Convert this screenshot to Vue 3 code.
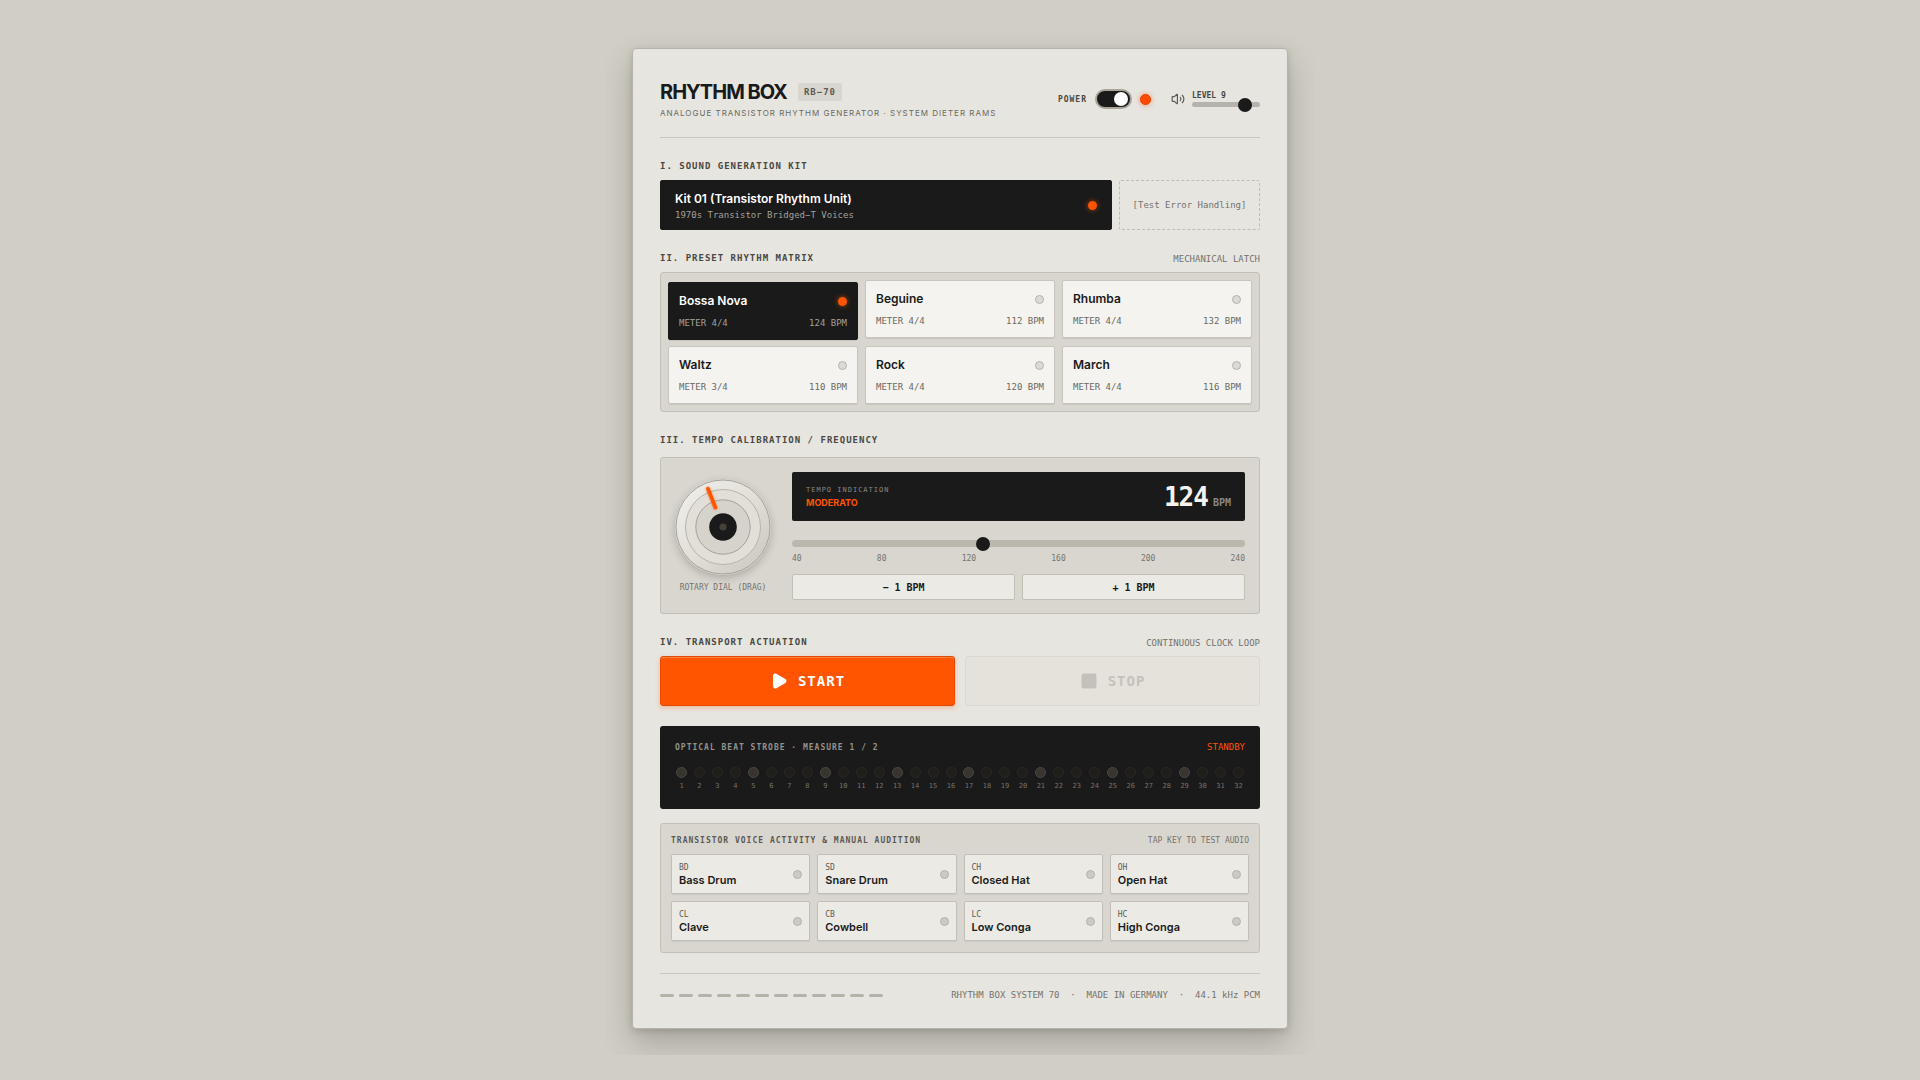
<template>
  <div class="page">
    <div class="stage">
      <main class="unit">
        <!-- header -->
        <header class="unit-header">
          <div class="brand">
            <div class="brand-row">
              <h1 class="brand-name">RHYTHM BOX</h1>
              <span class="brand-badge">RB−70</span>
            </div>
            <p class="brand-sub">ANALOGUE TRANSISTOR RHYTHM GENERATOR · SYSTEM DIETER RAMS</p>
          </div>
          <div class="master">
            <div class="power">
              <label class="power-label" for="power">POWER</label>
              <input id="power" v-model="power" class="power-switch" type="checkbox" role="switch" />
              <span class="led led-power" :class="{ off: !power }"></span>
            </div>
            <div class="volume">
              <svg class="volume-icon" viewBox="0 0 24 24" fill="none" stroke="currentColor" stroke-width="2" stroke-linecap="round" stroke-linejoin="round">
                <path d="M11 4.7a.7.7 0 0 0-1.2-.5L6.4 7.6a1.4 1.4 0 0 1-1 .4H3a1 1 0 0 0-1 1v6a1 1 0 0 0 1 1h2.4a1.4 1.4 0 0 1 1 .4l3.4 3.4a.7.7 0 0 0 1.2-.5z" />
                <path d="M16 9a5 5 0 0 1 0 6" />
                <path d="M19.4 18.4a9 9 0 0 0 0-12.8" />
              </svg>
              <div class="volume-body">
                <label class="volume-label" for="level">LEVEL {{ Math.round(level / 10) }}</label>
                <input id="level" v-model.number="level" class="slider slider-level" type="range" min="0" max="100" />
              </div>
            </div>
          </div>
        </header>

        <!-- kit -->
        <section class="section">
          <div class="section-head">
            <h2>I. SOUND GENERATION KIT</h2>
          </div>
          <div class="kit-row">
            <button class="kit" type="button">
              <span class="kit-text">
                <span class="kit-name">Kit 01 (Transistor Rhythm Unit)</span>
                <span class="kit-desc">1970s Transistor Bridged−T Voices</span>
              </span>
              <span class="led led-on"></span>
            </button>
            <button class="kit-error" type="button">[Test Error Handling]</button>
          </div>
        </section>

        <!-- presets -->
        <section class="section">
          <div class="section-head">
            <h2>II. PRESET RHYTHM MATRIX</h2>
            <span class="note">MECHANICAL LATCH</span>
          </div>
          <div class="tray presets">
            <button
              v-for="preset in presets"
              :key="preset.name"
              class="preset"
              :class="{ active: preset.name === current }"
              type="button"
              @click="selectPreset(preset)"
            >
              <span class="preset-line">
                <span class="preset-name">{{ preset.name }}</span>
                <span class="led" :class="{ 'led-on': preset.name === current }"></span>
              </span>
              <span class="preset-line preset-meta">
                <span>METER {{ preset.meter }}</span>
                <span>{{ preset.bpm }} BPM</span>
              </span>
            </button>
          </div>
        </section>

        <!-- tempo -->
        <section class="section">
          <div class="section-head section-head-wide">
            <h2>III. TEMPO CALIBRATION / FREQUENCY</h2>
          </div>
          <div class="tray tempo">
            <div class="dial-box">
              <svg class="dial" viewBox="0 0 96 96">
                <defs>
                  <linearGradient id="dialFace" x1="0" y1="0" x2="1" y2="1">
                    <stop offset="0" stop-color="#f1f0ec" />
                    <stop offset="0.5" stop-color="#e2dfd8" />
                    <stop offset="1" stop-color="#c8c5bd" />
                  </linearGradient>
                </defs>
                <circle cx="48" cy="48" r="47" fill="url(#dialFace)" stroke="#a5a39c" />
                <circle cx="48" cy="48" r="37.5" fill="#e2dfd8" stroke="#b5b3aa" />
                <circle cx="48" cy="48" r="27.2" fill="#d6d3cc" stroke="#a3a19a" />
                <circle cx="48" cy="48" r="13.8" fill="#1a1a1a" />
                <circle cx="48" cy="48" r="3.6" fill="#45413a" />
                <g :transform="`rotate(${dialAngle} 48 48)`">
                  <rect class="dial-pointer" x="46.2" y="5" width="3.8" height="24" rx="1.6" fill="#ff5500" />
                </g>
              </svg>
              <span class="dial-label">ROTARY DIAL (DRAG)</span>
            </div>
            <div class="tempo-body">
              <div class="readout">
                <div class="readout-left">
                  <span class="readout-label">TEMPO INDICATION</span>
                  <span class="readout-mark">{{ tempoMark }}</span>
                </div>
                <div class="readout-right">
                  <span class="readout-value">{{ bpm }}</span>
                  <span class="readout-unit">BPM</span>
                </div>
              </div>
              <input v-model.number="bpm" class="slider slider-tempo" type="range" min="40" max="240" aria-label="Tempo" />
              <div class="scale">
                <span v-for="mark in scale" :key="mark">{{ mark }}</span>
              </div>
              <div class="nudge-row">
                <button class="nudge" type="button" @click="nudge(-1)">− 1 BPM</button>
                <button class="nudge" type="button" @click="nudge(1)">+ 1 BPM</button>
              </div>
            </div>
          </div>
        </section>

        <!-- transport -->
        <section class="section">
          <div class="section-head">
            <h2>IV. TRANSPORT ACTUATION</h2>
            <span class="note">CONTINUOUS CLOCK LOOP</span>
          </div>
          <div class="transport">
            <button class="transport-btn start" type="button" :disabled="running" @click="running = true">
              <svg class="transport-icon" viewBox="0 0 24 24" fill="currentColor" stroke="currentColor" stroke-width="2" stroke-linejoin="round">
                <path d="M5 5a2 2 0 0 1 3-1.7l12 7a2 2 0 0 1 0 3.4l-12 7A2 2 0 0 1 5 19z" />
              </svg>
              <span>START</span>
            </button>
            <button class="transport-btn stop" type="button" :disabled="!running" @click="running = false">
              <svg class="transport-icon" viewBox="0 0 24 24" fill="currentColor" stroke="currentColor" stroke-width="2">
                <rect x="3" y="3" width="18" height="18" rx="2" />
              </svg>
              <span>STOP</span>
            </button>
          </div>
        </section>

        <!-- beat strobe -->
        <section class="section strobe">
          <div class="strobe-head">
            <h3>OPTICAL BEAT STROBE · MEASURE 1 / 2</h3>
            <span class="strobe-state">{{ running ? 'RUNNING' : 'STANDBY' }}</span>
          </div>
          <div class="steps">
            <div v-for="step in 32" :key="step" class="step">
              <span class="step-lamp" :class="{ beat: step % 4 === 1 }"></span>
              <span class="step-num">{{ step }}</span>
            </div>
          </div>
        </section>

        <!-- voices -->
        <section class="tray voices">
          <div class="voices-head">
            <h3>TRANSISTOR VOICE ACTIVITY &amp; MANUAL AUDITION</h3>
            <span class="voices-note">TAP KEY TO TEST AUDIO</span>
          </div>
          <div class="voice-grid">
            <button v-for="voice in voices" :key="voice.code" class="voice" type="button">
              <span class="voice-text">
                <span class="voice-code">{{ voice.code }}</span>
                <span class="voice-name">{{ voice.name }}</span>
              </span>
              <span class="led led-voice"></span>
            </button>
          </div>
        </section>

        <!-- footer -->
        <footer class="unit-footer">
          <div class="grille">
            <span v-for="slot in 12" :key="slot" class="grille-slot"></span>
          </div>
          <span class="footer-text">RHYTHM BOX SYSTEM 70&nbsp; ·&nbsp; MADE IN GERMANY&nbsp; ·&nbsp; 44.1 kHz PCM</span>
        </footer>
      </main>
    </div>
  </div>
</template>

<script setup>
import { ref, computed } from 'vue'

const presets = [
  { name: 'Bossa Nova', meter: '4/4', bpm: 124 },
  { name: 'Beguine', meter: '4/4', bpm: 112 },
  { name: 'Rhumba', meter: '4/4', bpm: 132 },
  { name: 'Waltz', meter: '3/4', bpm: 110 },
  { name: 'Rock', meter: '4/4', bpm: 120 },
  { name: 'March', meter: '4/4', bpm: 116 }
]

const voices = [
  { code: 'BD', name: 'Bass Drum' },
  { code: 'SD', name: 'Snare Drum' },
  { code: 'CH', name: 'Closed Hat' },
  { code: 'OH', name: 'Open Hat' },
  { code: 'CL', name: 'Clave' },
  { code: 'CB', name: 'Cowbell' },
  { code: 'LC', name: 'Low Conga' },
  { code: 'HC', name: 'High Conga' }
]

const scale = [40, 80, 120, 160, 200, 240]

const power = ref(true)
const level = ref(85)
const current = ref('Bossa Nova')
const bpm = ref(124)
const running = ref(false)

// 270° of travel over 40-240 BPM
const dialAngle = computed(() => ((bpm.value - 40) / 200) * 270 - 135)

const tempoMark = computed(() => {
  if (bpm.value < 76) return 'ADAGIO'
  if (bpm.value < 108) return 'ANDANTE'
  if (bpm.value < 126) return 'MODERATO'
  if (bpm.value < 168) return 'ALLEGRO'
  return 'PRESTO'
})

const selectPreset = (preset) => {
  current.value = preset.name
  bpm.value = preset.bpm
}

const nudge = (step) => {
  bpm.value = Math.min(240, Math.max(40, bpm.value + step))
}
</script>

<style>
body {
  background-color: #d1cec6;
}
</style>

<style scoped>
.page {
  min-height: 100vh;
  display: flex;
  align-items: center;
  justify-content: center;
  padding-bottom: 3px;
  background-color: #d1cec6;
  font-family: Inter, 'Liberation Sans', sans-serif;
  color: #1a1a1a;
}

.page *,
.page {
  box-sizing: border-box;
}

h1,
h2,
h3,
p {
  margin: 0;
}

button {
  margin: 0;
  padding: 0;
  border: none;
  background: none;
  font-family: inherit;
  color: inherit;
  text-align: left;
  cursor: pointer;
}

/* the stage clips the cabinet shadow */
.stage {
  width: 100%;
  max-width: 710px;
  padding: 26px 27px;
  overflow: hidden;
}

.unit {
  padding: 28px 27px 26px;
  background-color: #e6e5e0;
  border: 1px solid #b5b3aa;
  border-radius: 4px;
  box-shadow: 0 14px 30px rgba(60, 58, 50, 0.28), 0 2px 6px rgba(60, 58, 50, 0.18);
}

/* header */
.unit-header {
  display: flex;
  align-items: center;
  justify-content: space-between;
  padding-bottom: 16px;
  border-bottom: 1px solid #cac8c2;
}

.brand-row {
  display: flex;
  align-items: center;
  gap: 11px;
  height: 29px;
}

.brand-name {
  font-size: 20px;
  line-height: 28px;
  font-weight: 700;
  letter-spacing: -1px;
}

.brand-badge {
  padding: 0 6px;
  border-radius: 2px;
  background-color: #d9d6cf;
  font-family: 'DejaVu Sans Mono', monospace;
  font-size: 9px;
  line-height: 18px;
  font-weight: 700;
  letter-spacing: 1px;
  color: #5c5a53;
}

.brand-sub {
  font-size: 8px;
  line-height: 15px;
  letter-spacing: 1px;
  color: #6b6962;
}

.master,
.power,
.volume {
  display: flex;
  align-items: center;
}

.master {
  gap: 20px;
}

.power {
  gap: 8px;
}

.power-label,
.volume-label {
  font-family: 'DejaVu Sans Mono', monospace;
  font-size: 8px;
  font-weight: 700;
  color: #4a4842;
}

.power-label {
  letter-spacing: 1px;
}

.power-switch {
  appearance: none;
  display: flex;
  align-items: center;
  width: 37px;
  height: 20px;
  margin: 0;
  padding: 2px;
  border: 2px solid #a8a498;
  border-radius: 10px;
  background-color: #bab7ab;
  cursor: pointer;
}

.power-switch::before {
  content: '';
  width: 14px;
  height: 14px;
  border-radius: 50%;
  background-color: #ffffff;
}

.power-switch:checked {
  justify-content: flex-end;
  background-color: #1a1a1a;
}

/* indicator lamps */
.led {
  flex: none;
  width: 9px;
  height: 9px;
  border: 1px solid #b5b3ab;
  border-radius: 50%;
  background-color: #dcdad4;
}

.led-on {
  border-color: #ff5500;
  background-color: #ff5500;
  box-shadow: 0 0 5px rgba(255, 85, 0, 0.7);
}

.led-power {
  width: 11px;
  height: 11px;
  border-color: #e04000;
  background-color: #ff4800;
  box-shadow: 0 0 5px rgba(255, 72, 0, 0.6);
}

.led-power.off {
  border-color: #b5b3ab;
  background-color: #dcdad4;
  box-shadow: none;
}

.led-voice {
  background-color: #cccac4;
}

.volume {
  gap: 7px;
}

.volume-icon {
  width: 14px;
  height: 14px;
  color: #5c5a53;
}

.volume-body {
  display: flex;
  flex-direction: column;
  width: 68px;
}

.volume-label {
  line-height: 9px;
}

/* sliders */
.slider {
  appearance: none;
  display: block;
  width: 100%;
  margin: 0;
  border-radius: 4px;
  background-color: #bab7ac;
  cursor: pointer;
}

.slider::-webkit-slider-thumb {
  appearance: none;
  width: 14px;
  height: 14px;
  border-radius: 50%;
  background-color: #1a1a1a;
}

.slider-level {
  height: 5px;
  margin-top: 2px;
  background-color: #b5b3ab;
}

.slider-tempo {
  height: 7px;
  margin-top: 19px;
}

/* sections */
.section {
  margin-top: 20px;
}

.section-head {
  display: flex;
  align-items: center;
  justify-content: space-between;
  height: 17px;
  margin-bottom: 5px;
}

.section-head-wide {
  margin-bottom: 8px;
}

.section-head h2 {
  font-family: 'DejaVu Sans Mono', monospace;
  font-size: 9px;
  line-height: 17px;
  font-weight: 700;
  letter-spacing: 1px;
  color: #4a4842;
}

.note,
.kit-desc,
.preset-meta,
.strobe-state,
.footer-text {
  font-family: 'DejaVu Sans Mono', monospace;
  font-size: 9px;
}

.note {
  color: #75736c;
}

.tray {
  border: 1px solid #c2bfb5;
  border-radius: 3px;
  background-color: #d9d6cf;
}

/* kit */
.kit-row {
  display: grid;
  grid-template-columns: 1fr 141px;
  grid-auto-rows: 50px;
  gap: 7px;
}

.kit {
  display: flex;
  align-items: center;
  justify-content: space-between;
  padding: 0 14px;
  border: 1px solid #1a1a1a;
  border-radius: 2px;
  background-color: #1a1a1a;
}

.kit-text {
  display: flex;
  flex-direction: column;
}

.kit-name {
  font-size: 12px;
  line-height: 19px;
  font-weight: 600;
  color: #ffffff;
}

.kit-desc {
  line-height: 14px;
  color: #a3a19b;
}

.kit-error {
  border: 1px dashed #bfbdb5;
  border-radius: 2px;
  font-family: 'DejaVu Sans Mono', monospace;
  font-size: 9px;
  text-align: center;
  color: #75736c;
}

/* presets */
.presets {
  display: grid;
  grid-template-columns: repeat(3, 1fr);
  grid-auto-rows: 58px;
  gap: 8px 7px;
  padding: 7px;
}

.preset {
  display: flex;
  flex-direction: column;
  justify-content: center;
  gap: 7px;
  padding: 0 10px;
  border: 1px solid #c8c6be;
  border-radius: 2px;
  background-color: #f4f3ef;
  box-shadow: 0 1px 1px rgba(0, 0, 0, 0.08);
}

.preset-line {
  display: flex;
  align-items: center;
  justify-content: space-between;
}

.preset-name {
  font-size: 12px;
  line-height: 18px;
  font-weight: 600;
}

.preset-meta {
  line-height: 13px;
  color: #6b6962;
}

.preset.active {
  border-color: #1a1a1a;
  background-color: #1a1a1a;
  color: #ffffff;
  transform: translateY(2px);
}

.preset.active .preset-meta {
  color: #a3a19b;
}

/* tempo */
.tempo {
  display: flex;
  align-items: center;
  gap: 21px;
  padding: 14px 14px 13px;
}

.dial-box {
  flex: none;
  display: flex;
  flex-direction: column;
  align-items: center;
  gap: 7px;
  width: 96px;
}

.dial {
  width: 96px;
  height: 96px;
  border-radius: 50%;
  box-shadow: 0 3px 8px rgba(0, 0, 0, 0.2);
}

.dial-pointer {
  filter: drop-shadow(0 0 1px rgba(255, 85, 0, 0.6));
}

.dial-label {
  font-family: 'DejaVu Sans Mono', monospace;
  font-size: 8px;
  line-height: 12px;
  white-space: nowrap;
  color: #75736c;
}

.tempo-body {
  flex: 1;
}

.readout {
  display: flex;
  align-items: center;
  justify-content: space-between;
  height: 49px;
  padding: 0 14px;
  border-radius: 2px;
  background-color: #1a1a1a;
}

.readout-left {
  display: flex;
  flex-direction: column;
}

.readout-label {
  font-family: 'DejaVu Sans Mono', monospace;
  font-size: 7px;
  line-height: 12px;
  letter-spacing: 1px;
  color: #8a8882;
}

.readout-mark {
  font-size: 9px;
  line-height: 14px;
  font-weight: 700;
  color: #ff5500;
}

.readout-right {
  display: flex;
  align-items: baseline;
  gap: 5px;
  font-family: 'DejaVu Sans Mono', monospace;
  font-weight: 700;
}

.readout-value {
  font-size: 26px;
  line-height: 30px;
  letter-spacing: -1px;
  color: #f4f3ef;
}

.readout-unit {
  font-size: 10px;
  color: #8a8882;
}

.scale {
  display: flex;
  justify-content: space-between;
  margin-top: 6px;
  font-family: 'DejaVu Sans Mono', monospace;
  font-size: 8px;
  line-height: 12px;
  color: #75736c;
}

.nudge-row {
  display: grid;
  grid-template-columns: 1fr 1fr;
  gap: 7px;
  margin-top: 9px;
}

.nudge {
  height: 26px;
  border: 1px solid #c2bfb5;
  border-radius: 2px;
  background-color: #ebeae5;
  font-family: 'DejaVu Sans Mono', monospace;
  font-size: 10px;
  font-weight: 700;
  text-align: center;
}

/* transport */
.transport {
  display: grid;
  grid-template-columns: 1fr 1fr;
  gap: 10px;
}

.transport-btn {
  display: flex;
  align-items: center;
  justify-content: center;
  gap: 10px;
  height: 50px;
  border: 1px solid transparent;
  border-radius: 3px;
  font-family: 'DejaVu Sans Mono', monospace;
  font-size: 14px;
  font-weight: 700;
  letter-spacing: 1px;
}

.transport-icon {
  width: 18px;
  height: 18px;
}

.start {
  border-color: #e64a00;
  background-color: #ff5500;
  box-shadow: 0 2px 5px rgba(255, 85, 0, 0.3), inset 0 1px 0 rgba(255, 255, 255, 0.3);
  color: #ffffff;
}

.stop {
  border-color: #dad8d1;
  background-color: #e5e2dc;
  color: #c4c1bb;
}

/* beat strobe */
.strobe {
  height: 83px;
  padding: 14px 15px;
  border-radius: 3px;
  background-color: #1a1a1a;
}

.strobe-head {
  display: flex;
  align-items: center;
  justify-content: space-between;
  height: 14px;
}

.strobe-head h3,
.voices-head h3 {
  font-family: 'DejaVu Sans Mono', monospace;
  font-size: 8px;
  font-weight: 700;
  letter-spacing: 1px;
}

.strobe-head h3 {
  color: #94928c;
}

.strobe-state {
  color: #ff5500;
}

.steps {
  display: grid;
  grid-template-columns: repeat(32, 1fr);
  gap: 5px;
  margin-top: 13px;
}

.step {
  display: flex;
  flex-direction: column;
  align-items: center;
  gap: 4px;
}

.step-lamp {
  width: 11px;
  height: 11px;
  border: 1px solid #292825;
  border-radius: 50%;
  background-color: #1f1e1b;
}

.step-lamp.beat {
  border-color: #4a4843;
  background-color: #38342e;
}

.step-num {
  font-family: 'DejaVu Sans Mono', monospace;
  font-size: 7px;
  line-height: 9px;
  color: #75736c;
}

/* voices */
.voices {
  margin-top: 14px;
  padding: 10px 10px 11px;
}

.voices-head {
  display: flex;
  align-items: center;
  justify-content: space-between;
  height: 13px;
  margin-bottom: 7px;
}

.voices-head h3 {
  color: #5c5a53;
}

.voices-note {
  font-family: 'DejaVu Sans Mono', monospace;
  font-size: 8px;
  color: #75736c;
}

.voice-grid {
  display: grid;
  grid-template-columns: repeat(4, 1fr);
  grid-auto-rows: 40px;
  gap: 7px;
}

.voice {
  display: flex;
  align-items: center;
  justify-content: space-between;
  padding: 0 7px;
  border: 1px solid #c2bfb8;
  border-radius: 2px;
  background-color: #ebeae5;
  box-shadow: 0 1px 1px rgba(0, 0, 0, 0.06);
}

.voice-text {
  display: flex;
  flex-direction: column;
}

.voice-code {
  font-family: 'DejaVu Sans Mono', monospace;
  font-size: 8px;
  line-height: 11px;
  color: #5c5a53;
}

.voice-name {
  font-size: 11px;
  line-height: 14px;
  font-weight: 600;
}

/* footer */
.unit-footer {
  display: flex;
  align-items: center;
  justify-content: space-between;
  margin-top: 20px;
  padding-top: 14px;
  border-top: 1px solid #cac8c2;
}

.grille {
  display: flex;
  gap: 5px;
}

.grille-slot {
  width: 14px;
  height: 3px;
  border-radius: 2px;
  background-color: #b5b3a8;
}

.footer-text {
  line-height: 14px;
  color: #75736c;
}

@media (max-width: 640px) {
  .presets {
    grid-template-columns: repeat(2, 1fr);
  }
  .voice-grid {
    grid-template-columns: repeat(2, 1fr);
  }
}
</style>
